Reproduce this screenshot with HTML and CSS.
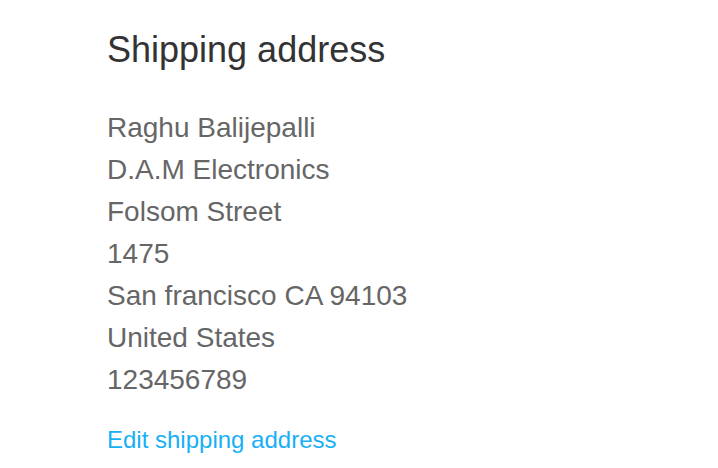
FILE: index.html
```html
<!DOCTYPE html>
<html>
<head>
<meta charset="utf-8">
<link rel="stylesheet" href="styles.css">
</head>
<body>
<section class="shipping">
  <h1 class="title">Shipping address</h1>
  <address class="addr">
    <div>Raghu Balijepalli</div>
    <div>D.A.M Electronics</div>
    <div>Folsom Street</div>
    <div>1475</div>
    <div>San francisco CA 94103</div>
    <div>United States</div>
    <div>123456789</div>
  </address>
  <a class="edit" href="#">Edit shipping address</a>
</section>
</body>
</html>
```
FILE: styles.css
```css
html, body {
  margin: 0;
  padding: 0;
  background: #fff;
}
body {
  font-family: "Liberation Sans", Arial, Helvetica, sans-serif;
}
.shipping {
  display: flex;
  flex-direction: column;
  align-items: flex-start;
  padding: 29px 0 0 107px;
}
.title {
  margin: 0;
  font-size: 36px;
  line-height: 42px;
  font-weight: normal;
  color: #333;
}
.addr {
  margin: 36px 0 0;
  font-style: normal;
  font-size: 28px;
  line-height: 42px;
  color: #666;
}
.edit {
  margin-top: 24px;
  font-size: 24px;
  line-height: 30px;
  color: #17b0f5;
  text-decoration: none;
}
```
